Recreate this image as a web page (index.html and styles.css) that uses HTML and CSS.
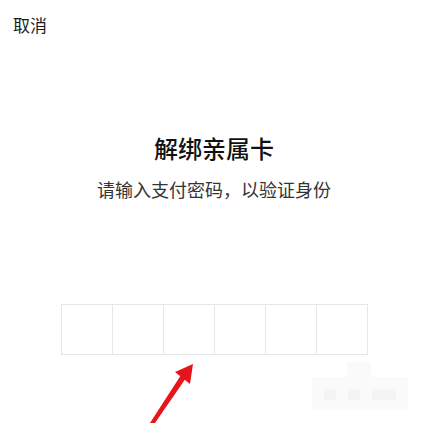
FILE: index.html
```html
<!DOCTYPE html>
<html lang="zh">
<head>
<meta charset="utf-8">
<title>解绑亲属卡</title>
<link rel="stylesheet" href="styles.css">
</head>
<body>
<div class="page">
  <header class="topbar"><span class="cancel">取消</span></header>
  <main class="content">
    <h1 class="title">解绑亲属卡</h1>
    <p class="subtitle">请输入支付密码，以验证身份</p>
    <div class="pin">
      <div class="cell"></div>
      <div class="cell"></div>
      <div class="cell"></div>
      <div class="cell"></div>
      <div class="cell"></div>
      <div class="cell"></div>
    </div>
  </main>
  <svg class="overlay" width="428" height="423" viewBox="0 0 428 423" aria-hidden="true">
    <g fill="#fafafa">
      <rect x="312" y="377" width="96" height="33"/>
      <rect x="347" y="362" width="24" height="15"/>
    </g>
    <g fill="#f4f4f4">
      <rect x="324" y="389" width="12" height="11"/>
      <rect x="348" y="389" width="12" height="11"/>
      <rect x="372" y="389" width="24" height="11"/>
    </g>
    <polygon fill="#e8141c" points="150,423 155,423 186,378 181,375"/>
    <polygon fill="#e8141c" points="193,364 175,372 190,384"/>
  </svg>
</div>
</body>
</html>
```
FILE: styles.css
```css
html, body {
  margin: 0;
  padding: 0;
  background: #ffffff;
}
body {
  font-family: "Noto Sans CJK SC", "Noto Sans", sans-serif;
  color: #1a1a1a;
}
.page {
  position: relative;
  width: 428px;
  height: 423px;
  overflow: hidden;
}
.topbar {
  height: 50px;
  display: flex;
  align-items: center;
  padding-left: 13px;
}
.cancel {
  font-size: 17px;
  line-height: 24px;
  color: #1a1a1a;
}
.content {
  display: flex;
  flex-direction: column;
  align-items: center;
}
.title {
  margin: 82px 0 0;
  font-size: 24px;
  line-height: 32px;
  font-weight: 500;
  color: #111111;
}
.subtitle {
  margin: 12px 0 0;
  font-size: 18px;
  line-height: 26px;
  color: #333333;
}
.pin {
  margin: 102px 0 0 1px;
  display: grid;
  grid-template-columns: repeat(6, 51px);
  border-top: 1px solid #e6e6e6;
  border-bottom: 1px solid #e6e6e6;
  border-left: 1px solid #e6e6e6;
}
.cell {
  height: 49px;
  border-right: 1px solid #e6e6e6;
}
.overlay {
  position: absolute;
  left: 0;
  top: 0;
}
```
